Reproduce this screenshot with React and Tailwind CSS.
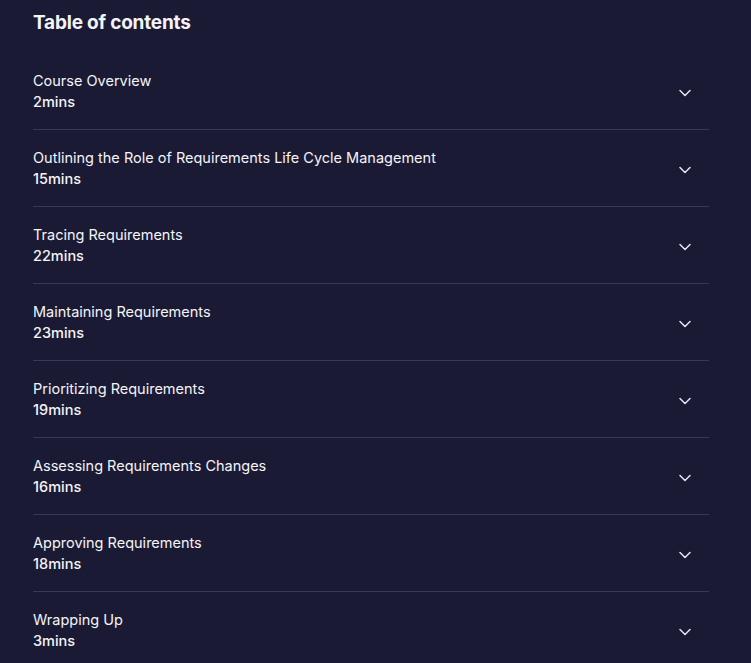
import React from 'react'

const sections = [
  { title: 'Course Overview', time: '2mins' },
  { title: 'Outlining the Role of Requirements Life Cycle Management', time: '15mins' },
  { title: 'Tracing Requirements', time: '22mins' },
  { title: 'Maintaining Requirements', time: '23mins' },
  { title: 'Prioritizing Requirements', time: '19mins' },
  { title: 'Assessing Requirements Changes', time: '16mins' },
  { title: 'Approving Requirements', time: '18mins' },
  { title: 'Wrapping Up', time: '3mins' },
]

const Chevron = () => (
  <svg width="12" height="8" viewBox="0 0 12 8" fill="none" className="text-[#e6e6f0]">
    <path d="M1 1.5l5 5 5-5" stroke="currentColor" strokeWidth="1.5" strokeLinecap="round" strokeLinejoin="round" />
  </svg>
)

const App = () => {
  return (
    <div className="min-h-screen bg-[#1b1a34] text-[#f4f4f8] font-['Inter','Noto_Sans',sans-serif] pl-[33px] pr-[42px] pt-[9px]">
      <h2 className="text-[19px] font-bold leading-[28px] tracking-[-0.2px]">Table of contents</h2>
      <div className="mt-[16px]">
        {sections.map((s) => (
          <div
            key={s.title}
            className="flex items-center justify-between border-b border-[#3a3856] pt-[17px] pb-[17px]"
          >
            <div className="flex flex-col">
              <span className="text-[14.5px] leading-[21px]">{s.title}</span>
              <span className="text-[14.5px] leading-[21px] font-medium">{s.time}</span>
            </div>
            <div className="pr-[18px] pt-[4px]">
              <Chevron />
            </div>
          </div>
        ))}
      </div>
    </div>
  )
}

export default App
